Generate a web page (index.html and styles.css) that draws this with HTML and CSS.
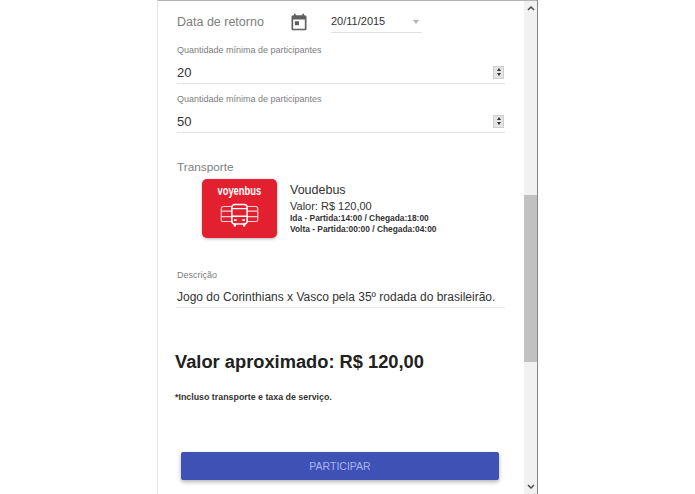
FILE: index.html
```html
<!DOCTYPE html>
<html lang="pt-BR">
<head>
<meta charset="utf-8">
<title>Participar</title>
<link rel="stylesheet" href="styles.css">
</head>
<body>
<main class="dialog">
  <div class="content">
    <div class="date-row">
      <span class="date-label">Data de retorno</span>
      <svg class="cal" viewBox="0 0 24 24" width="20" height="20"><path fill="#5f5f5f" d="M19 4h-1V2h-2v2H8V2H6v2H5c-1.1 0-2 .9-2 2v14c0 1.1.9 2 2 2h14c1.1 0 2-.9 2-2V6c0-1.1-.9-2-2-2zm0 16H5V9h14v11zM7 11h5v5H7z"/></svg>
      <div class="date-field"><span>20/11/2015</span><i class="caret"></i></div>
    </div>

    <label class="field-label first">Quantidade mínima de participantes</label>
    <div class="number-field"><span>20</span><div class="spin"><i class="up"></i><i class="down"></i></div></div>

    <label class="field-label second">Quantidade mínima de participantes</label>
    <div class="number-field"><span>50</span><div class="spin"><i class="up"></i><i class="down"></i></div></div>

    <div class="section-label">Transporte</div>
    <div class="transport">
      <div class="logo">
        <div class="logo-text">voyenbus</div>
        <svg viewBox="0 0 46 28" width="39" height="24" fill="none" stroke="#fff">
          <g stroke-width="1.4" opacity=".8">
            <path d="M14 4H4C2.500 4 1.500 5 1.500 6.500V20c0 1 .7 1.700 1.700 1.700H14"/><path d="M1.500 9.500H14M1.500 16H14"/>
            <path d="M32 4h10c1.500 0 2.500 1 2.500 2.500V20c0 1-.7 1.700-1.700 1.700H32"/><path d="M32 9.500h12.500M32 16h12.500"/>
          </g>
          <rect x="14" y="1.500" width="18" height="23" rx="3.500" stroke-width="1.800"/>
          <path d="M14 6.500h18M14 15.500h18" stroke-width="1.600"/>
          <path d="M17.500 24.500v3M28.500 24.500v3" stroke-width="2.600"/>
          <path d="M16.500 20h3M26.500 20h3" stroke-width="2"/>
        </svg>
      </div>
      <div class="transport-info">
        <div class="name">Voudebus</div>
        <div class="price">Valor: R$ 120,00</div>
        <div class="leg">Ida - Partida:14:00 / Chegada:18:00</div>
        <div class="leg">Volta - Partida:00:00 / Chegada:04:00</div>
      </div>
    </div>

    <label class="field-label desc">Descrição</label>
    <div class="desc-field">Jogo do Corinthians x Vasco pela 35º rodada do brasileirão.</div>

    <h2 class="total">Valor aproximado: R$ 120,00</h2>
    <p class="note">*Incluso transporte e taxa de serviço.</p>

    <button class="join" type="button">PARTICIPAR</button>
  </div>
  <div class="scrollbar">
    <svg class="arrow" viewBox="0 0 8 5" width="8" height="5"><path d="M1 4l3-3 3 3" fill="none" stroke="#505050" stroke-width="1.5"/></svg>
    <div class="thumb"></div>
    <svg class="arrow" viewBox="0 0 8 5" width="8" height="5"><path d="M1 1l3 3 3-3" fill="none" stroke="#505050" stroke-width="1.5"/></svg>
  </div>
</main>
</body>
</html>
```
FILE: styles.css
```css
* { box-sizing: border-box; }
html, body { margin: 0; height: 100%; background: #fff; overflow: hidden; }
body { font-family: "Liberation Sans", Arial, sans-serif; color: #333; }

.dialog {
  margin-left: 157px;
  width: 381px;
  height: 494px;
  display: flex;
  border-left: 1px solid #e6e6e6;
  border-right: 2px solid #858585;
  border-top: 1px solid #b4b4b4;
}
.content { width: 366px; padding: 0 19px; flex: none; }

.date-row { display: flex; align-items: flex-start; height: 32px; }
.date-label { margin-top: 13px; font-size: 12.500px; color: #7d7d7d; width: 112px; line-height: 17px; }
.cal { margin-top: 11px; flex: none; }
.date-field {
  margin-left: 22px; margin-top: 9px; width: 91px; height: 23px;
  border-bottom: 1px solid #e0e0e0; font-size: 11px; line-height: 15px; padding-top: 4px;
  display: flex; justify-content: space-between;
}
.caret {
  margin: 6px 3px 0 0; width: 0; height: 0;
  border-left: 3.500px solid transparent; border-right: 3.500px solid transparent; border-top: 4px solid #b5b5b5;
}

.field-label { display: block; font-size: 9px; line-height: 12px; color: #7d7d7d; }
.first { margin-top: 11px; }
.second { margin-top: 9px; }
.desc { margin-top: 31px; }

.number-field {
  display: flex; justify-content: space-between; align-items: center;
  width: 328px; height: 28px; border-bottom: 1px solid #e0e0e0;
  font-size: 13px; padding-top: 5px;
}
.spin {
  width: 11px; height: 13px; margin-right: 1px; background: #e4e4e4; border: 1px solid #cfcfcf;
  display: flex; flex-direction: column; align-items: center; justify-content: space-around;
}
.up, .down { width: 0; height: 0; border-left: 2.500px solid transparent; border-right: 2.500px solid transparent; }
.up { border-bottom: 3px solid #333; }
.down { border-top: 3px solid #333; }

.section-label { margin-top: 27px; font-size: 11.800px; line-height: 15px; color: #808080; }

.transport { display: flex; margin: 4px 0 0 25px; }
.logo {
  width: 75px; height: 59px; background: #e2202f; border-radius: 5px;
  box-shadow: 0 1px 3px rgba(0,0,0,.3);
  display: flex; flex-direction: column; align-items: center;
}
.logo-text { color: #fff; font: 700 13px/14px "Liberation Sans", sans-serif; margin: 5px 0 5px; transform: scaleX(.72); white-space: nowrap; }
.transport-info { margin-left: 13px; padding-top: 4px; }
.name { font-size: 12.500px; line-height: 15px; }
.price { font-size: 11px; line-height: 13px; margin-top: 2px; }
.leg { font-size: 8.400px; line-height: 11px; font-weight: 700; }

.desc-field {
  width: 328px; height: 26px; border-bottom: 1px solid #e8e8e8;
  font-size: 12px; line-height: 15px; padding-top: 8px; margin-top: 1px; white-space: nowrap;
}

.total { margin: 43px 0 0 -2px; font: 700 18.300px/22px "Liberation Sans", sans-serif; color: #212121; }
.note { margin: 19px 0 0 -2px; font: 700 8.850px/10px "Liberation Sans", sans-serif; }

.join {
  display: block; width: 318px; height: 28px; margin: 50px 0 0 4px;
  background: #3f51b5; color: #a9b4ee; border: 0; border-radius: 2px;
  font: 400 10.500px "Liberation Sans", sans-serif;
  box-shadow: 0 2px 4px rgba(0,0,0,.3);
}

.scrollbar {
  width: 13px; flex: none; background: #f1f1f1; height: 100%;
  display: flex; flex-direction: column; align-items: center;
}
.arrow { flex: none; margin: 5px 0; }
.thumb { width: 13px; height: 167px; background: #c1c1c1; margin-top: 179px; margin-bottom: auto; }
```
